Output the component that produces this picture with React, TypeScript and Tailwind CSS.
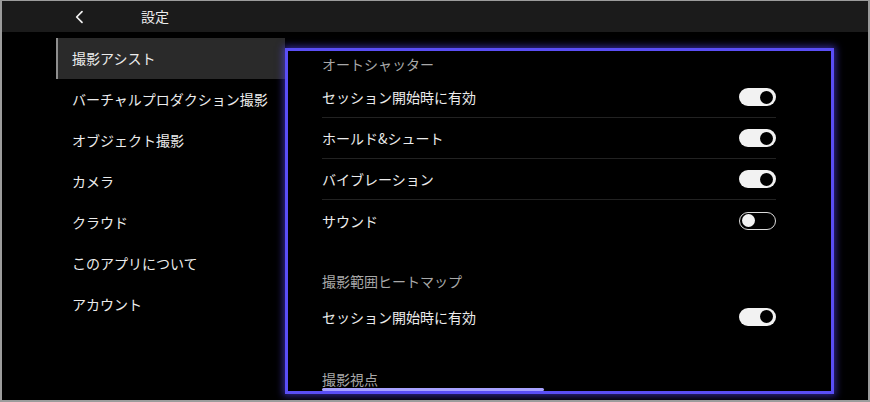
import React from "react";

const font = { fontFamily: '"Noto Sans CJK JP", "Noto Sans", sans-serif' };

function Toggle({ on }: { on: boolean }) {
  if (on) {
    return (
      <div className="w-[37px] h-[18px] rounded-full bg-[#f2f2f2] flex items-center justify-end pr-[3px]">
        <div className="w-[13px] h-[13px] rounded-full bg-black" />
      </div>
    );
  }
  return (
    <div className="w-[37px] h-[18px] rounded-full border-[1.5px] border-[#dcdcdc] flex items-center pl-[2px]">
      <div className="w-[13px] h-[13px] rounded-full bg-[#f2f2f2]" />
    </div>
  );
}

function Row({ label, on, divider }: { label: string; on: boolean; divider?: boolean }) {
  return (
    <div
      className={
        "h-[41px] flex items-center justify-between " +
        (divider ? "border-b border-[#222222]" : "")
      }
    >
      <span className="text-[14px] leading-[20px] text-[#ececec]">{label}</span>
      <Toggle on={on} />
    </div>
  );
}

export default function App() {
  const items = [
    "撮影アシスト",
    "バーチャルプロダクション撮影",
    "オブジェクト撮影",
    "カメラ",
    "クラウド",
    "このアプリについて",
    "アカウント",
  ];
  return (
    <div
      style={font}
      className="w-[870px] h-[402px] bg-black border-l-2 border-r-2 border-b-2 border-t border-[#9c9c9c] flex flex-col overflow-hidden"
    >
      <div className="h-[31px] shrink-0 bg-[#1b1b1b] flex items-center pl-[70px]">
        <svg width="16" height="16" viewBox="0 0 24 24" fill="none" stroke="#f0f0f0" strokeWidth="2.6" strokeLinecap="round" strokeLinejoin="round">
          <path d="M15 4 L7 12 L15 20" />
        </svg>
        <span className="ml-[53px] text-[14px] leading-[20px] text-[#ececec] -mt-[1px]">設定</span>
      </div>
      <div className="flex flex-1 min-h-0">
        <div className="w-[283px] shrink-0 pl-[54px] pt-[6px]">
          {items.map((t, i) => (
            <div
              key={t}
              className={
                "h-[41px] flex items-center text-[14px] leading-[20px] text-[#ececec] " +
                (i === 0
                  ? "bg-[#2a2a2a] border-l-2 border-[#8e8e8e] pl-[14px] pb-[1px]"
                  : "pl-[16px] pb-[1px]")
              }
            >
              {t}
            </div>
          ))}
        </div>
        <div className="pt-[16px] pb-[6px] pr-[34px] flex-1 min-w-0 flex">
          <div className="relative flex-1 border-[3px] border-[#5a4ef6] shadow-[0_0_7px_2px_rgba(85,70,255,0.55)] overflow-hidden pl-[34px] pr-[55px]">
            <div className="h-[26px] flex items-center text-[14px] leading-[20px] text-[#a8a8a8]">
              オートシャッター
            </div>
            <Row label="セッション開始時に有効" on divider />
            <Row label="ホールド&シュート" on divider />
            <Row label="バイブレーション" on divider />
            <Row label="サウンド" on={false} />
            <div className="h-[55px] flex items-end pb-[5px] text-[14px] leading-[20px] text-[#a8a8a8]">
              撮影範囲ヒートマップ
            </div>
            <Row label="セッション開始時に有効" on />
            <div className="h-[59px] flex items-end pb-[7px] text-[14px] leading-[20px] text-[#a8a8a8]">
              撮影視点
            </div>
            <div className="absolute left-[34px] bottom-[0px] w-[222px] h-[3px] rounded-full bg-[#a8a2ff]" />
          </div>
        </div>
      </div>
    </div>
  );
}
